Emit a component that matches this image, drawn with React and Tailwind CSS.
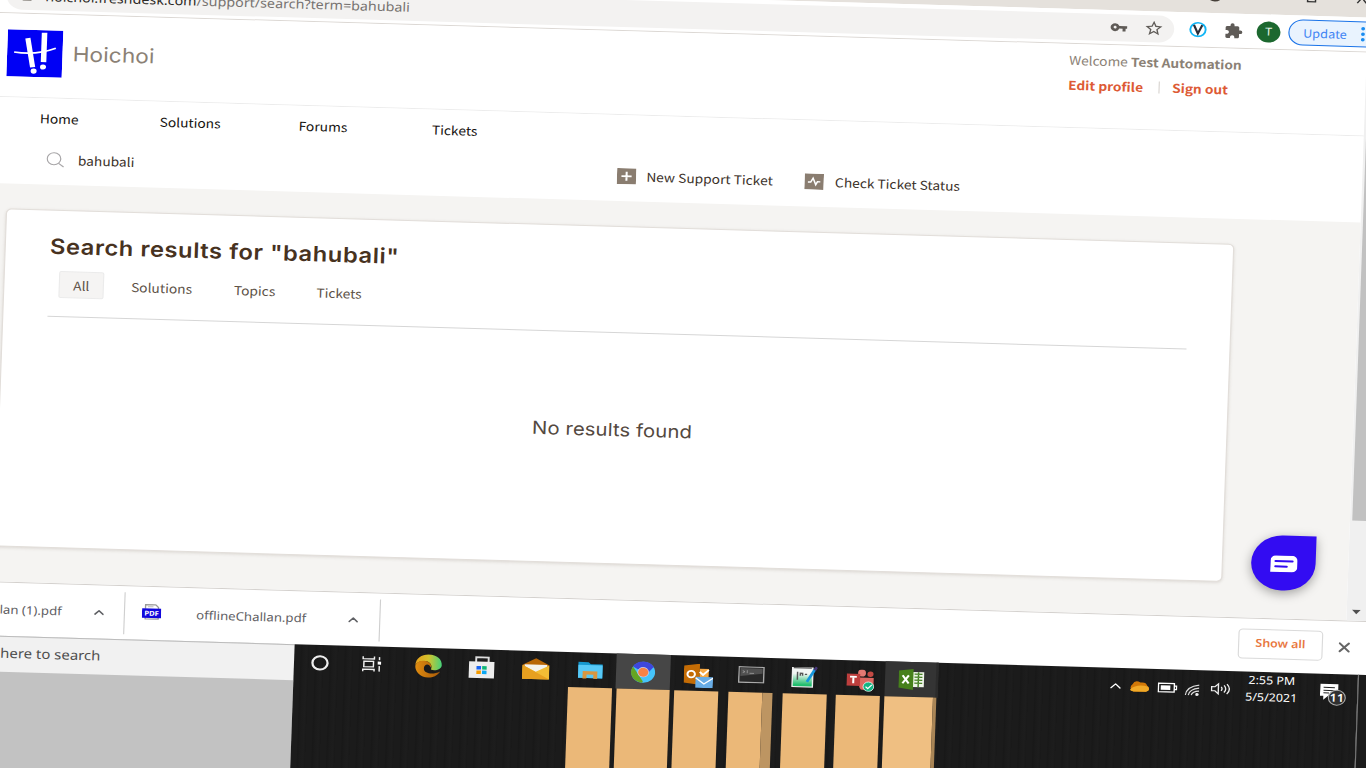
import React from "react";
import { MdVpnKey, MdStarBorder, MdExtension } from "react-icons/md";
import { ChevronUp, X } from "lucide-react";

const sans = "font-['Noto_Sans_CJK_SC','Noto_Sans',sans-serif]";
const poppins = "font-['Inter',sans-serif]";
const system = "font-['Noto_Sans','Open_Sans',sans-serif]";

function Logo() {
  return (
    <svg viewBox="0 0 48 48" className="block h-[47px] w-[49px]" preserveAspectRatio="none">
      <rect width="48" height="48" fill="#0000f5" />
      <g stroke="#fff" fill="none">
        <path d="M17.500 8.500L22.500 38" strokeWidth="4.500" />
        <path d="M31.800 2.500L31.800 32.500" strokeWidth="4.800" />
        <path d="M6 23Q25 26 42 18" strokeWidth="1.700" />
      </g>
      <circle cx="23.500" cy="42" r="2.600" fill="#fff" />
      <circle cx="31.500" cy="37.500" r="2.600" fill="#fff" />
    </svg>
  );
}

function BrowserTop() {
  return (
    <div>
      <div className="grid h-[18px] grid-cols-[1066px_86px_45px_20px] bg-[#e5e1dc]">
        <span />
        <svg viewBox="0 0 16 18" className="h-[18px] w-4"><circle cx="8" cy="-1" r="7.5" fill="#46403a" /></svg>
        <svg viewBox="0 0 16 18" className="h-[18px] w-4"><path d="M4 -5H11V4H4Z" fill="none" stroke="#333" strokeWidth="1.3" /></svg>
        <svg viewBox="0 0 16 18" className="h-[18px] w-4"><path d="M3 4L9 -4M5 -4L11 4" stroke="#333" strokeWidth="1.3" /></svg>
      </div>
      <div className="grid h-[35px] grid-cols-[6px_1033px_13px_31px_29px_28px_100px] items-center border-b border-[#dcd8d4] bg-white">
        <span />
        <div className="grid h-[27px] grid-cols-[13px_21px_942px_30px_20px] items-center rounded-full bg-[#f3f2f1] text-[#5f5b57]">
          <span />
          <svg viewBox="0 0 12 14" className="h-3 w-2.5"><rect x="1" y="5" width="10" height="8" rx="1" fill="#9b9792" /></svg>
          <div className={`${system} whitespace-nowrap text-[12.65px] leading-none text-[#777370]`}>
            <span className="text-[#2c2926]">hoichoi.freshdesk.com</span>/support/search?term=bahubali
          </div>
          <MdVpnKey className="h-4 w-4" />
          <MdStarBorder className="h-[18px] w-[18px]" />
        </div>
        <span />
        <svg viewBox="0 0 16 16" className="h-4 w-4"><circle cx="8" cy="8" r="6.8" fill="#fff" stroke="#12b5f5" strokeWidth="1.7" /><path d="M4.300 3.500L8 12L11.700 3.500" fill="none" stroke="#2b2f38" strokeWidth="2" /></svg>
        <MdExtension className="h-[17px] w-[17px] text-[#5f5b57]" />
        <div className={`${system} flex h-[21px] w-[21px] items-center justify-center rounded-full bg-[#1c682f] text-[11px] text-[#e5f3e8]`}>T</div>
        <div className={`${sans} flex h-[26px] items-center rounded-l-full border border-[#1a73e8] bg-[#e9f3fe] pl-3 text-[11.3px] text-[#4285f4]`}>
          <span className="w-[51px]">Update</span>
          <svg viewBox="0 0 4 16" className="h-4 w-1"><g fill="#1a8cf0"><circle cx="2" cy="2.5" r="1.7" /><circle cx="2" cy="8" r="1.7" /><circle cx="2" cy="13.5" r="1.7" /></g></svg>
        </div>
      </div>
    </div>
  );
}

function Header() {
  return (
    <header className="grid h-[84px] grid-cols-[8px_58px_881px_220px] border-b border-[#ececec] bg-white">
      <span />
      <div className="pt-[16px]"><Logo /></div>
      <div className={`${poppins} pt-[27px] text-[20px] leading-6 tracking-[0.1px] text-[#8b8175]`}>Hoichoi</div>
      <div className={`${sans} pt-[7px] text-[12.15px] leading-[18px] text-[#8b8175]`}>
        <div>Welcome <b>Test Automation</b></div>
        <div className="mt-[7px] grid grid-cols-[80px_12px_60px] items-center font-bold text-[#dd5a35]">
          <span>Edit profile</span>
          <span className="h-3 w-px bg-[#d8d4d0]" />
          <span>Sign out</span>
        </div>
      </div>
    </header>
  );
}

function Nav() {
  return (
    <nav className={`${sans} h-[86px] whitespace-nowrap bg-white text-[12.2px] leading-5 text-[#3b3129]`}>
      <div className="grid h-[39px] grid-cols-[39px_106px_123px_118px_80px] items-center text-[#15120f]">
        <span /><span>Home</span><span>Solutions</span><span>Forums</span><span>Tickets</span>
      </div>
      <div className="grid h-[44px] grid-cols-[46px_28px_477px_26px_140px_27px_140px] items-center">
        <span />
        <svg viewBox="0 0 16 16" className="h-4 w-4" fill="none" stroke="#a8a6a8" strokeWidth="1.1"><circle cx="6.800" cy="7" r="6" /><path d="M11 11.500L15.500 15" /></svg>
        <span>bahubali</span>
        <svg viewBox="0 0 17 16" className="h-4 w-[17px]"><rect width="17" height="16" fill="#8a7d70" /><path d="M8.5 3.5V12.5M4 8H13" stroke="#fff" strokeWidth="1.8" /></svg>
        <span>New Support Ticket</span>
        <svg viewBox="0 0 17 16" className="h-4 w-[17px]"><rect width="17" height="16" fill="#8a7d70" /><path d="M3 8.5H5.5L7.5 4.5L10 11L11.5 8H14" fill="none" stroke="#fff" strokeWidth="1.4" /></svg>
        <span>Check Ticket Status</span>
      </div>
    </nav>
  );
}

function Results() {
  return (
    <main className="h-[338px] w-[1087px] rounded-[5px] border border-[#e2deda] bg-white pl-[39px] pt-[22px] shadow-[0_1px_3px_rgba(80,60,40,0.15)]">
      <h1 className={`${poppins} whitespace-nowrap text-[21px] font-semibold leading-7 tracking-[0.5px] text-[#47321f]`}>Search results for "bahubali"</h1>
      <div className={`${sans} mt-[10px] grid h-[27px] grid-cols-[9px_40px_24px_91px_73px_60px] items-center text-[12.2px] leading-5 text-[#5d5247]`}>
        <span />
        <span className="flex h-[27px] items-center justify-center rounded-xs border border-[#ebebeb] bg-[#f5f4f3]">All</span>
        <span />
        <span>Solutions</span><span>Topics</span><span>Tickets</span>
      </div>
      <div className="mt-[18px] h-px w-[1008px] bg-[#d6d6d6]" />
      <p className={`${poppins} w-[1008px] pl-[432px] pt-[85px] text-[18px] leading-6 tracking-[0.05px] text-[#54493f]`}>No results found</p>
    </main>
  );
}

function PageBody() {
  return (
    <div className="grid h-[398px] grid-cols-[12px_1087px_1fr] bg-[#f5f4f2] pt-[25px]">
      <span />
      <Results />
      <div className="pl-[25px] pt-[290px]">
        <div className="flex h-[55px] w-[57px] items-center justify-center rounded-bl-full rounded-br-full rounded-tl-full rounded-tr-[6px] bg-[#330cf2] shadow-[0_3px_10px_rgba(0,0,0,0.35)]">
          <svg viewBox="0 0 24 17" className="mt-0.5 h-[17px] w-6"><path d="M5 0H19a5 5 0 015 5V11a5 5 0 01-5 5.500H0V5a5 5 0 015-5Z" fill="#fff" /><path d="M4.500 5.600H19.500M4.500 11H14.500" stroke="#330cf2" strokeWidth="2" strokeLinecap="round" /></svg>
        </div>
      </div>
    </div>
  );
}

function Scrollbar() {
  return (
    <div className="flex h-[568px] w-[50px] flex-col bg-[#f0f0f0] pl-0.5">
      <div className="mt-[17px] h-[451px] bg-[#c1c1c1]" />
      <svg viewBox="0 0 10 6" className="ml-[2px] mt-[89px] h-1.5 w-2.5"><path d="M0.500 0H8.500L4.500 4.500Z" fill="#505050" /></svg>
    </div>
  );
}

function Pdf() {
  return (
    <svg viewBox="0 0 17 16" className="-mt-1 h-4 w-[17px]">
      <path d="M3 5V.8H12L14.500 3.300V5M3 12V15H14.500V12" fill="#fff" stroke="#999" strokeWidth="1.200" />
      <path d="M5 2.800H10" stroke="#bbb" />
      <rect y="4.500" width="17" height="9.500" fill="#1208dc" />
      <text x="8.500" y="11.800" textAnchor="middle" fontFamily="Noto Sans" fontWeight="700" fontSize="6.800" fill="#fff">PDF</text>
    </svg>
  );
}

function Downloads() {
  return (
    <div className={`${system} grid h-[54px] grid-cols-[19px_81px_29px_16px_48px_132px_30px_760px_88px_30px] items-center whitespace-nowrap border-t border-[#d4d1ce] bg-white text-[11.7px] text-[#5f6064]`}>
      <span />
      <span>lan (1).pdf</span>
      <ChevronUp className="h-3.5 w-3.5" strokeWidth={2.5} />
      <span className="h-[42px] w-px bg-[#cfcfcf]" />
      <Pdf />
      <span>offlineChallan.pdf</span>
      <ChevronUp className="h-3.5 w-3.5" strokeWidth={2.5} />
      <span className="h-[42px] w-px bg-[#cfcfcf]" />
      <span className="-mt-1 flex h-[30px] w-[75px] items-center justify-center rounded border border-[#dadada] text-[11px] font-semibold text-[#e8783f]">Show all</span>
      <X className="-ml-0.5 -mt-0.5 h-4 w-4 text-[#666]" strokeWidth={2.800} />
    </div>
  );
}

const icon = "h-6 w-6";

function TaskIcons() {
  return (
    <div className="grid h-[35px] grid-cols-[11px_46px_50px_47px_48px_48px_35px_48px_50px_43px_50px_47px_47px] items-center">
      <span />
      <svg viewBox="0 0 24 24" className={icon}><circle cx="12" cy="12" r="6.700" fill="none" stroke="#eee" strokeWidth="2" /></svg>
      <svg viewBox="0 0 24 24" className={icon}><path d="M4 4V6.500H14V4M4 19V17H14V19M4.800 9H13.300V14.500H4.800ZM18.500 4.500V7.500M18.500 13.500V19" fill="none" stroke="#eee" strokeWidth="1.300" /><rect x="17" y="9" width="3" height="3" fill="#fff" /></svg>
      <svg viewBox="0 0 24 24" className={icon}>
        <defs>
          <linearGradient id="eg"><stop stopColor="#e8a01c" /><stop offset=".5" stopColor="#d3c42e" /><stop offset="1" stopColor="#45d27a" /></linearGradient>
          <linearGradient id="eo" x1="0" x2="1"><stop stopColor="#e08c10" /><stop offset="1" stopColor="#a85a08" /></linearGradient>
        </defs>
        <path d="M.3 12C.5 4 6 .5 12 .5C19 .5 24 5 23.700 11C23.500 15 18 17 14.200 15.500C16 11 13 7 8.500 7C4 7 1 9 .3 12Z" fill="url(#eg)" />
        <path d="M.3 12C1.500 8 5 6.500 9 7C13 7.500 15.500 11 14 13.500C12.500 8.500 7.500 10.500 8 15C8.500 19.500 16 21 22.500 17C20 21.500 16 23.500 12 23.500C5 23.500 .3 18 .3 12Z" fill="url(#eo)" />
      </svg>
      <svg viewBox="0 0 24 24" className={icon}><path d="M7 8V1.800H18V8" fill="none" stroke="#ddd" strokeWidth="1.700" /><path d="M.8 6H23.200V22.500H.8Z" fill="#ededed" /><path d="M7.500 10.500H11.500V14H7.500Z" fill="#1864f2" /><path d="M12.500 10.500H16.500V14H12.500Z" fill="#0eb777" /><path d="M7.500 15H11.500V18.500H7.500Z" fill="#f59b00" /><path d="M12.500 15H16.500V18.500H12.500Z" fill="#0aa8f3" /></svg>
      <svg viewBox="0 0 24 24" className={icon}><path d="M0 8L12 1L24 8V14H0Z" fill="#b86606" /><path d="M2 7.500H22V11L12 15L2 11Z" fill="#f4f2ee" /><path d="M0 8L12 14.500L24 8V22H0Z" fill="#f2bd35" /><path d="M0 8L24 22H0Z" fill="#e7a020" /></svg>
      <svg viewBox="0 0 24 24" className={icon}><path d="M1.500 3.500H10.500L12.500 5.500H23V19.500H1.500Z" fill="#1698cf" /><path d="M1.500 6.500H23V19.500H1.500Z" fill="#57c9f7" /><path d="M5.500 20V12.500H18.500V20H15V16H9V20Z" fill="#d9963f" /></svg>
      <div className="flex h-full items-center justify-center bg-[#464646]">
        <svg viewBox="0 0 24 24" className="h-[22px] w-[22px]"><circle cx="12" cy="12" r="11.500" fill="#45c4fa" /><path d="M12 12L2 6A11.500 11.500 0 0122 6Z" fill="#3e47dd" /><path d="M2 6L12 22L11 23.500A11.500 11.500 0 012 6Z" fill="#65a522" /><path d="M12 6H22L17 12Z" fill="#3e47dd" /><circle cx="12" cy="12" r="5.600" fill="#c5cdf0" /><circle cx="12" cy="12" r="4.900" fill="#f78245" /></svg>
      </div>
      <div className="flex justify-center pt-1"><svg viewBox="0 0 26 24" className="h-6 w-[26px]"><path d="M0 2L14 0V21L0 19Z" fill="#c46c05" /><path d="M14 5H22V14H14Z" fill="#f7a944" /><circle cx="6.500" cy="10.500" r="3.300" fill="none" stroke="#fff" strokeWidth="1.800" /><path d="M14 8L17 11L22 6" fill="none" stroke="#fff" strokeWidth="1.800" /><path d="M10.500 13H26V24H10.500Z" fill="#68ace5" /><path d="M10.500 14L18 20L26 14" fill="none" stroke="#fff" strokeWidth="1.300" /></svg></div>
      <div className="flex justify-center"><svg viewBox="0 0 24 17" className="h-[17px] w-6"><rect x=".7" y=".7" width="22" height="15.500" fill="#282828" stroke="#aaa" strokeWidth="1.200" /><path d="M2 2H21.500V7L2 10Z" fill="#505050" /><path d="M4 4.500L6 5.500L4 6.500M8 4V7M10 7H14" fill="none" stroke="#999" strokeWidth=".8" /></svg></div>
      <div className="flex justify-center"><svg viewBox="0 0 24 24" className={icon}><defs><linearGradient id="ng" y2="1" x2="0"><stop offset=".3" stopColor="#f3f6f4" /><stop offset=".9" stopColor="#1fbd6c" /></linearGradient></defs><path d="M2 3H20V22H2Z" fill="url(#ng)" stroke="#eee" strokeWidth="1.200" /><path d="M6.500 7V15M9 11V8.500H11V11M13 9.500H15M3 3H19" fill="none" stroke="#555" strokeWidth="1.300" /><path d="M15 17L22 4" stroke="#1596dd" strokeWidth="2.500" /><path d="M21.500 5L23.500 2" stroke="#483778" strokeWidth="2.500" /></svg></div>
      <div className="flex justify-center pl-1"><svg viewBox="0 0 25 22" className="mt-1 h-[22px] w-[25px]"><circle cx="13.500" cy="3.500" r="3.500" fill="#e47a73" /><circle cx="21" cy="4.500" r="2.700" fill="#c44a44" /><path d="M11 8H24V15Q20 21 13 20Q10 17 11 8Z" fill="#de6861" /><path d="M0 4.500H12V16.500H0Z" fill="#bd3e3d" /><path d="M3 7.500H9M6 7.500V14" stroke="#fff" strokeWidth="1.800" /><circle cx="19.500" cy="17" r="4.700" fill="#13b584" stroke="#fff" strokeWidth=".7" /><path d="M17 17L19 19L22.500 15" fill="none" stroke="#fff" strokeWidth="1.200" /></svg></div>
      <div className="flex h-full items-center justify-center border-r-2 border-[#2b2b2b] bg-[#343434]"><svg viewBox="0 0 24 21" className="ml-0.5 h-[21px] w-6"><path d="M12 3H22.500V18H12Z" fill="#eef5e8" /><path d="M14 5H21M14 8H21M14 11H21M14 14H21M17.500 3V18" stroke="#458023" strokeWidth="1.300" /><path d="M0 2L13 0V21L0 19Z" fill="#46801b" /><path d="M3.500 6.500L9 14.500M9 6.500L3.500 14.500" stroke="#fff" strokeWidth="1.900" /></svg></div>
    </div>
  );
}

function Bars() {
  return (
    <div className="grid h-[100px] grid-cols-[243px_39px_4px_47px_4px_39px_9px_30px_9px_9px_39px_8px_39px_4px_43px_3px]">
      <span /><span className="bg-[#ebb878]" />
      <span /><span className="bg-[#ebb878]" />
      <span /><span className="bg-[#ebb878]" />
      <span /><span className="bg-[#ebb878]" /><span className="bg-[#bd9562]" />
      <span /><span className="bg-[#ebb878]" />
      <span /><span className="bg-[#ebb878]" />
      <span /><span className="bg-[#efbf82]" /><span className="bg-[#a98556]" />
    </div>
  );
}

function Tray() {
  return (
    <div className={`${system} grid h-[35px] grid-cols-[20px_25px_24px_23px_31px_66px_30px] items-center whitespace-nowrap text-white`}>
      <ChevronUp className="h-4 w-4" strokeWidth={1.8} />
      <svg viewBox="0 0 18 12" className="h-3 w-[18px]"><path d="M4 11a4 4 0 01-1-7Q5-1 10 2Q15 1 16 5Q20 9 15 11Z" fill="#d17808" /><path d="M1 9Q7 3 17 6Q19 10 15 11H4Q1 11 1 9Z" fill="#f0a928" /></svg>
      <svg viewBox="0 0 18 12" className="h-3 w-[18px]"><path d="M1 2H15V10.500H1ZM15.500 4.500H17V8H15.500" fill="none" stroke="#fff" strokeWidth="1.200" /><path d="M3 4H11.500V8.500H3Z" fill="#fff" /></svg>
      <svg viewBox="0 0 16 14" className="mt-1 h-3 w-3.5"><g fill="none" stroke="#ddd" strokeWidth="1.200"><path d="M1 13Q2 3 15 1M4 13Q5 6 15 4.500M7 13Q8 8.500 15 8" /></g><circle cx="13" cy="12" r="1.800" fill="#eee" /></svg>
      <svg viewBox="0 0 18 14" className="h-3.5 w-[18px]"><path d="M1 5H4L7 2V12L4 9H1ZM9.500 5Q11 7 9.500 9M12 3.500Q15 7 12 10.500M14.500 2Q19 7 14.500 12" fill="none" stroke="#eee" strokeWidth="1.200" /></svg>
      <div className="-mt-1 w-[46px] text-center text-[11px] leading-[17px]"><div>2:55 PM</div><div>5/5/2021</div></div>
      <svg viewBox="0 0 28 26" className="mt-1 h-[26px] w-7"><path d="M0 3H16V15H7L3 19V15H0Z" fill="#fff" /><path d="M3 6.500H13M3 9.500H13M3 12H8" stroke="#222" strokeWidth="1" /><circle cx="15" cy="16.500" r="7.500" fill="#303030" stroke="#aaa" /><text x="15" y="20.500" textAnchor="middle" fontFamily="Noto Sans" fontWeight="600" fontSize="11" fill="#fff">11</text></svg>
    </div>
  );
}

function Taskbar() {
  return (
    <div className="flex h-[134px]">
      <div className="w-[281px] shrink-0 bg-[#c2c2c2]">
        <div className={`${system} h-9 border-t border-[#bbb] bg-[#f1f1f1] pl-[21px] text-[13.2px] leading-[33px] text-[#4e4e4e]`}>here to search</div>
      </div>
      <div className="w-[941px] shrink-0 bg-[#1b1b1b]">
        <div className="flex h-full bg-[repeating-linear-gradient(90deg,#1b1b1b_0px,#1b1b1b_5px,#181818_6px,#1b1b1b_8px,#1d1d1d_11px,#191919_13px)]">
          <div className="w-[719px] shrink-0"><TaskIcons /><Bars /></div>
          <Tray />
        </div>
      </div>
      <div className="w-[38px] shrink-0 border-l border-[#777] bg-[#1b1b1b]" />
    </div>
  );
}

export default function App() {
  return (
    <div className="h-[768px] w-[1366px] overflow-hidden bg-white">
      <div className="h-[810px] w-[1260px] origin-top-left [transform:matrix(1.13,0.0326,-0.036,1,1.44,-40)]">
        <BrowserTop />
        <div className="flex">
          <div className="w-[1210px] shrink-0 overflow-hidden">
            <Header />
            <Nav />
            <PageBody />
          </div>
          <Scrollbar />
        </div>
        <Downloads />
        <Taskbar />
      </div>
    </div>
  );
}
